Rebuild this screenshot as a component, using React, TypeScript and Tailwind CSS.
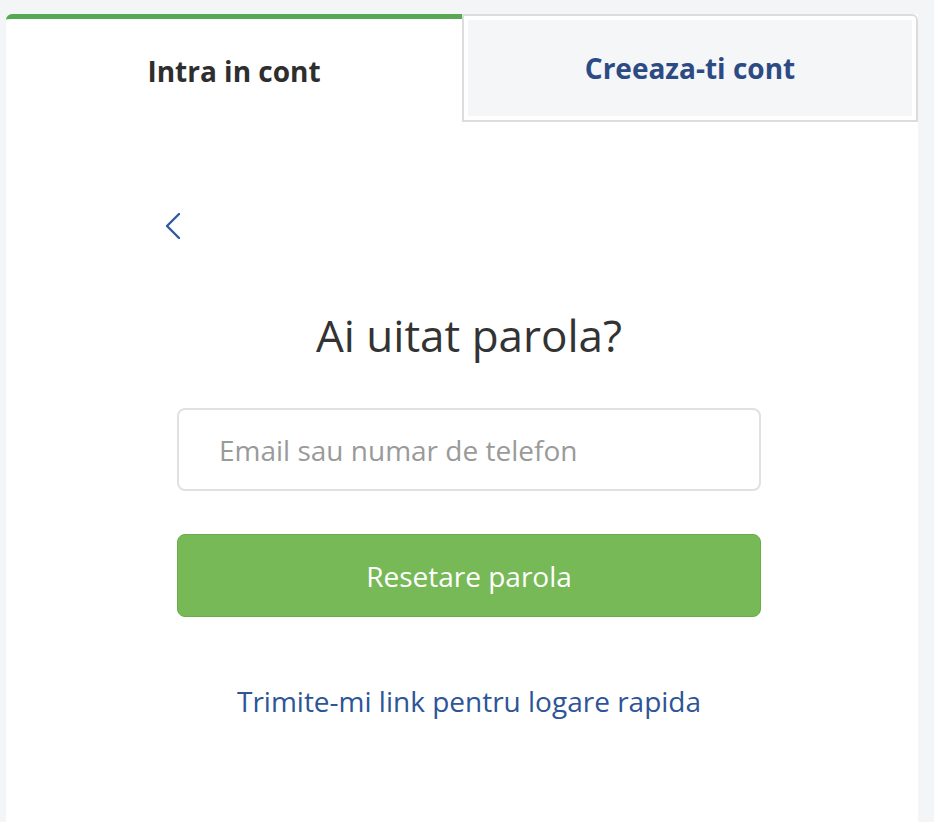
const font = { fontFamily: '"Open Sans", "Noto Sans", sans-serif' }

function Tabs() {
  return (
    <div className="flex">
      <div className="w-[456px] h-[108px] border-t-[5px] border-[#56a853] rounded-tl-md flex items-center justify-center">
        <span className="text-[28px] font-bold text-[#2e2e2e]">Intra in cont</span>
      </div>
      <div className="flex-1 h-[108px] border-2 border-[#dcdcdc] rounded-tr-md bg-white p-[4px]">
        <div className="h-full bg-[#f5f6f8] flex items-center justify-center">
          <span className="text-[28px] font-bold text-[#2c4b85]">Creeaza-ti cont</span>
        </div>
      </div>
    </div>
  )
}

export default function App() {
  return (
    <div className="min-h-screen bg-[#f4f5f7] pt-[14px] pl-[6px]" style={font}>
      <div className="w-[912px] min-h-[808px] bg-white rounded-tl-md">
        <Tabs />
        <div className="pl-[157px] pt-[90px] flex">
          <button className="flex text-[#2d5aa0]" aria-label="Inapoi">
            <svg width="20" height="28" viewBox="0 0 20 28" fill="none">
              <path d="M16 2 L4 14 L16 26" stroke="currentColor" strokeWidth="2.4" strokeLinecap="round" strokeLinejoin="round" />
            </svg>
          </button>
        </div>
        <div className="ml-[171px] w-[584px] flex flex-col items-center">
          <h1 className="mt-[65px] text-[44px] leading-[60px] text-[#333333]">Ai uitat parola?</h1>
          <input
            className="mt-[43px] w-full h-[83px] rounded-lg border-2 border-[#e1e1e1] px-[40px] text-[28px] text-[#333] placeholder:text-[#9a9a9a] outline-none"
            placeholder="Email sau numar de telefon"
          />
          <button className="mt-[43px] w-full h-[83px] rounded-lg bg-[#77b957] border border-[#6aab4b] text-white text-[28px]">
            Resetare parola
          </button>
          <a className="mt-[65px] text-[28px] leading-[38px] text-[#2d5597]">Trimite-mi link pentru logare rapida</a>
        </div>
      </div>
    </div>
  )
}
